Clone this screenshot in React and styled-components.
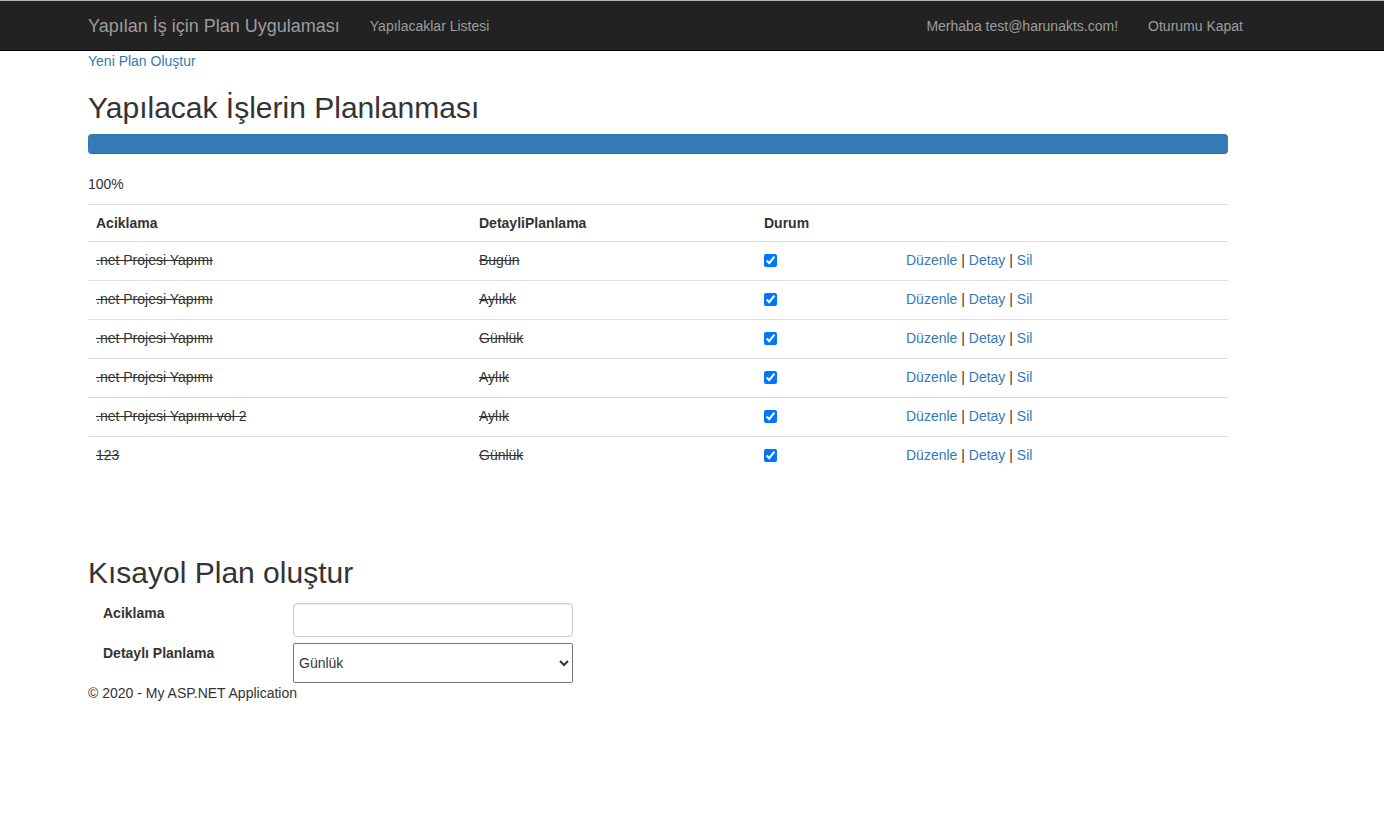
import React from 'react';
import styled, { createGlobalStyle } from 'styled-components';

const GlobalStyle = createGlobalStyle`
  html, body {
    margin: 0;
    padding: 0;
    background: #fff;
  }
  body {
    font-family: "Liberation Sans", Arial, sans-serif;
    font-size: 14px;
    line-height: 20px;
    color: #333;
  }
  * { box-sizing: border-box; }
`;

const rows = [
  { aciklama: '.net Projesi Yapımı', detay: 'Bugün' },
  { aciklama: '.net Projesi Yapımı', detay: 'Aylıkk' },
  { aciklama: '.net Projesi Yapımı', detay: 'Günlük' },
  { aciklama: '.net Projesi Yapımı', detay: 'Aylık' },
  { aciklama: '.net Projesi Yapımı vol 2', detay: 'Aylık' },
  { aciklama: '123', detay: 'Günlük' },
];

export default function App() {
  return (
    <>
      <GlobalStyle />
      <Navbar>
        <NavContainer>
          <Brand href="#">Yapılan İş için Plan Uygulaması</Brand>
          <NavLink href="#">Yapılacaklar Listesi</NavLink>
          <NavRight>
            <NavLink href="#">Merhaba test@harunakts.com!</NavLink>
            <NavLink href="#">Oturumu Kapat</NavLink>
          </NavRight>
        </NavContainer>
      </Navbar>

      <Container>
        <Paragraph><Link href="#">Yeni Plan Oluştur</Link></Paragraph>
        <Heading>Yapılacak İşlerin Planlanması</Heading>
        <Progress>
          <ProgressBar style={{ width: '100%' }} />
        </Progress>
        <Paragraph>100%</Paragraph>

        <Table>
          <tbody>
            <tr>
              <Th $width={383}>Aciklama</Th>
              <Th $width={285}>DetayliPlanlama</Th>
              <Th $width={142}>Durum</Th>
              <Th />
            </tr>
            {rows.map((row, i) => (
              <tr key={i}>
                <Td><Strike>{row.aciklama}</Strike></Td>
                <Td><Strike>{row.detay}</Strike></Td>
                <Td><Check type="checkbox" checked readOnly /></Td>
                <Td>
                  <Link href="#">Düzenle</Link> | <Link href="#">Detay</Link> | <Link href="#">Sil</Link>
                </Td>
              </tr>
            ))}
          </tbody>
        </Table>

        <SubHeading>Kısayol Plan oluştur</SubHeading>
        <Form>
          <FormRow>
            <Label>Aciklama</Label>
            <TextInput type="text" />
          </FormRow>
          <FormRow>
            <Label>Detaylı Planlama</Label>
            <Select defaultValue="Günlük">
              <option>Günlük</option>
              <option>Haftalık</option>
              <option>Aylık</option>
              <option>Bugün</option>
            </Select>
          </FormRow>
        </Form>
        <Footer>© 2020 - My ASP.NET Application</Footer>
      </Container>
    </>
  );
}

const Navbar = styled.nav`
  background: #222;
  border-top: 1px solid #b5b5b5;
  border-bottom: 1px solid #080808;
  height: 51px;
`;

const NavContainer = styled.div`
  width: 1170px;
  margin-left: 73px;
  height: 100%;
  display: flex;
  align-items: center;
`;

const Brand = styled.a`
  padding: 0 15px;
  font-size: 18px;
  line-height: 20px;
  color: #9d9d9d;
  text-decoration: none;
`;

const NavLink = styled.a`
  padding: 0 15px;
  font-size: 14px;
  line-height: 20px;
  color: #9d9d9d;
  text-decoration: none;
`;

const NavRight = styled.div`
  margin-left: auto;
  margin-right: -15px;
  display: flex;
`;

const Container = styled.div`
  width: 1170px;
  margin-left: 73px;
  padding: 0 15px;
`;

const Paragraph = styled.p`
  margin: 0 0 10px;
`;

const Link = styled.a`
  color: #337ab7;
  text-decoration: none;
`;

const Heading = styled.h2`
  font-size: 30px;
  font-weight: 500;
  line-height: 1.1;
  margin: 20px 0 10px;
  color: #333;
`;

const SubHeading = styled(Heading)`
  margin: 81px 0 14px;
`;

const Progress = styled.div`
  height: 20px;
  margin-bottom: 20px;
  background: #f5f5f5;
  border-radius: 4px;
  overflow: hidden;
  box-shadow: inset 0 1px 2px rgba(0, 0, 0, 0.1);
`;

const ProgressBar = styled.div`
  height: 100%;
  background: #337ab7;
  box-shadow: inset 0 -1px 0 rgba(0, 0, 0, 0.15);
`;

const Table = styled.table`
  width: 100%;
  border-collapse: collapse;
  border-spacing: 0;
  margin-bottom: 20px;
`;

const Th = styled.th`
  text-align: left;
  font-weight: bold;
  padding: 8px;
  line-height: 20px;
  border-top: 1px solid #ddd;
  width: ${(p) => (p.$width ? `${p.$width}px` : 'auto')};
`;

const Td = styled.td`
  padding: 8px 8px 10px;
  line-height: 20px;
  border-top: 1px solid #ddd;
  vertical-align: top;
`;

const Strike = styled.span`
  text-decoration: line-through;
`;

const Check = styled.input`
  width: 13px;
  height: 13px;
  margin: 4px 0 0;
  vertical-align: top;
`;

const Form = styled.form`
  display: flex;
  flex-direction: column;
  gap: 6px;
`;

const FormRow = styled.div`
  display: flex;
  align-items: flex-start;
`;

const Label = styled.label`
  width: 205px;
  padding-left: 15px;
  font-weight: bold;
  line-height: 20px;
`;

const TextInput = styled.input`
  width: 280px;
  height: 34px;
  padding: 6px 12px;
  font-family: "Liberation Sans", Arial, sans-serif;
  font-size: 14px;
  color: #555;
  border: 1px solid #ccc;
  border-radius: 4px;
  box-shadow: inset 0 1px 1px rgba(0, 0, 0, 0.075);
  outline: none;
`;

const Select = styled.select`
  width: 280px;
  height: 40px;
  padding: 0 1px;
  font-family: "Liberation Sans", Arial, sans-serif;
  font-size: 14px;
  color: #333;
  border: 1px solid #767676;
  border-radius: 2px;
  background: #fff;
`;

const Footer = styled.p`
  margin: 0;
  line-height: 20px;
`;
